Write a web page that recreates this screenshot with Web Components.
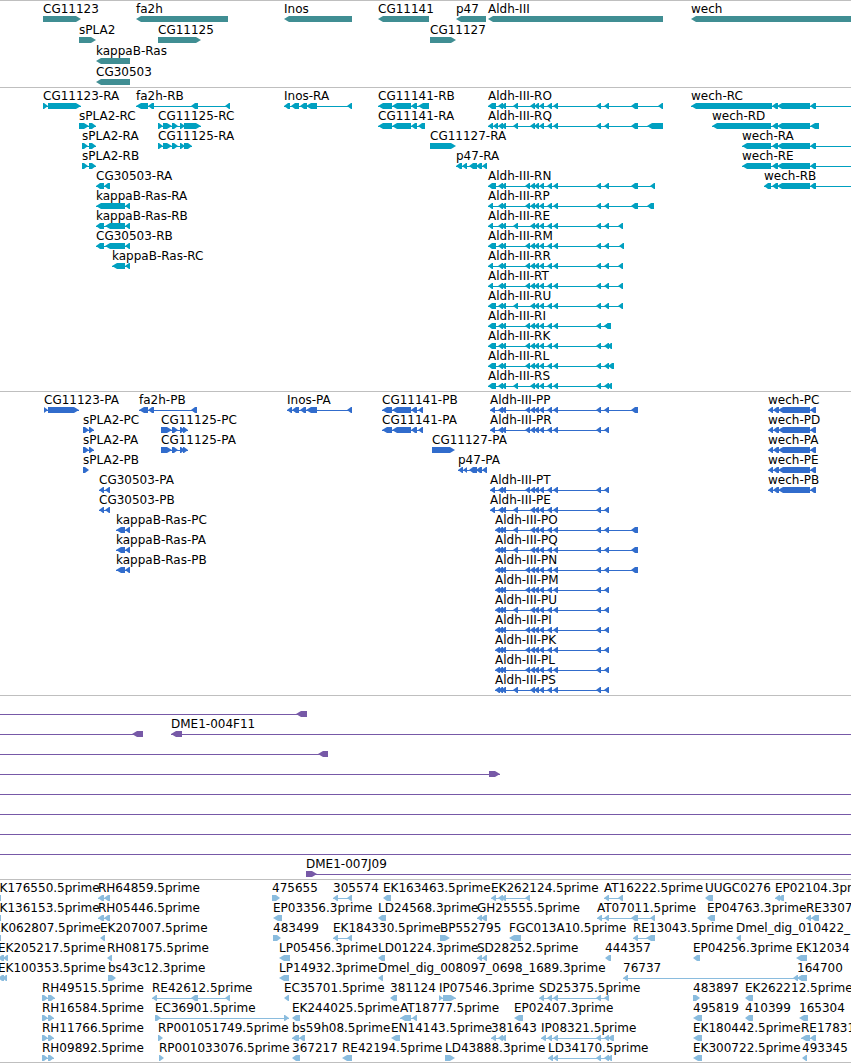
<!DOCTYPE html>
<html lang="en">
<head>
<meta charset="utf-8">
<title>Genome browser</title>
<style>
  body { margin: 0; background: #fff; color: #000; font: 12px/14px "DejaVu Sans", Verdana, sans-serif; }
</style>
</head>
<body>
<genome-view></genome-view>

<template id="view-template">
  <style>
    :host { display: block; overflow: hidden; }
    genome-track:first-of-type { --row-gap: 1px; }
    genome-track:last-of-type { --pad-end: 1px; border-bottom: 1px solid #bfbfbf; }
  </style>
</template>

<template id="track-template">
  <style>
    :host {
      display: flex; flex-direction: column; gap: var(--row-gap, 0);
      padding: 1px 0 var(--pad-end, 2px);
      border-top: 1px solid #bfbfbf;
    }
  </style>
  <slot></slot>
</template>

<template id="row-template">
  <style>
    :host { display: block; position: relative; height: 20px; }
  </style>
  <slot></slot>
</template>

<template id="feature-template">
  <style>
    /* a feature's left edge is its coordinate on the sequence */
    :host { display: block; position: absolute; top: 0; left: var(--start); white-space: nowrap; }
    .label { height: 14px; }
    svg { display: block; height: 6px; fill: var(--ink); }
  </style>
  <div class="label"><slot></slot></div>
  <svg aria-hidden="true"></svg>
</template>

<script>
const stamp = (host, id) => {
  host.attachShadow({ mode: "open" }).append(document.getElementById(id).content.cloneNode(true));
  return host.shadowRoot;
};

class GenomeTrack extends HTMLElement {
  constructor() { super(); stamp(this, "track-template"); }
}
class TrackRow extends HTMLElement {
  constructor() { super(); stamp(this, "row-template"); }
}

class SeqFeature extends HTMLElement {
  constructor() { super(); stamp(this, "feature-template"); }
  connectedCallback() {
    const exons = this.getAttribute("exons").trim().split(/\s+/).map(e => e.split("..").map(Number));
    const forward = this.getAttribute("strand") === "+";
    const start = exons[0][0];
    const width = Math.max(...exons.map(e => e[1])) - start;
    this.style.setProperty("--start", start + "px");
    const svg = this.shadowRoot.querySelector("svg");
    svg.setAttribute("width", width);
    svg.setAttribute("height", 6);
    let body = exons.length > 1 ? `<rect x="0" y="3" width="${width}" height="1"/>` : "";
    for (const [from, to] of exons) {
      const a = from - start, b = to - start, head = b - a > 8 ? 5 : Math.min(4, b - a);
      body += forward
        ? `<path d="M${a} 0H${b - head}L${b} 3L${b - head} 6H${a}Z"/>`
        : `<path d="M${b} 0H${a + head}L${a} 3L${a + head} 6H${b}Z"/>`;
    }
    svg.innerHTML = body;
  }
}

/* exon runs shared by many transcripts */
const PAIR = "498..503 501..506", EX3 = "513..518", EX4 = "525..530";
const CORE = "530..535 534..539 539..544 547..552 553..558 596..601 604..609";
const LONG = `${PAIR} ${EX3} ${CORE}`, SHORT = `${PAIR} ${EX4} ${CORE}`;
const WECH = "772..778 777..810 810..816", EDGE = "3990..4000";
const aldh = (name, first, middle, last = "") => ["Aldh-III-" + name, "-", `${first} ${middle} ${last}`];
const R = "488..493", RW = "488..496", P = "490..495", PN = "495..500";
const wechP = name => ["wech-" + name, "-", "768..773 773..779 778..810 810..816"];

const TRACKS = [
  { ink: "#408e93", rows: [
    [["CG11123","+","43..81"],["fa2h","-","136..228"],["Inos","-","284..352"],["CG11141","-","378..429"],["p47","-","456..486"],["Aldh-III","-","488..663"],["wech","-","691..4000"]],
    [["sPLA2","+","79..96"],["CG11125","+","158..201"],["CG11127","+","430..456"]],
    [["kappaB-Ras","-","96..130"]],
    [["CG30503","-","96..130"]],
  ]},
  { ink: "#00a0c0", rows: [
    [["CG11123-RA","+","43..48 48..81"],["fa2h-RB","-","136..148 148..154 191..198 225..230"],["Inos-RA","-","284..290 291..299 300..307 306..317 347..352"],["CG11141-RB","-","378..392 392..411 411..417 418..429"],aldh("RO",RW,LONG,"631..638 658..663"),["wech-RC","-",`691..772 ${WECH} ${EDGE}`]],
    [["sPLA2-RC","+","79..89 89..96"],["CG11125-RC","+","158..163 163..172 172..178 180..185 184..201"],["CG11141-RA","-","378..392 392..411 411..417 418..425"],aldh("RQ",R + " 493..498",LONG,"631..638 647..663"),["wech-RD","-","712..771 772..778 777..810 810..819"]],
    [["sPLA2-RA","+","82..88 89..96"],["CG11125-RA","+","158..163 163..172 172..178 180..185 184..192"],["CG11127-RA","+","430..456"],["wech-RA","-",`742..771 ${WECH} ${EDGE}`]],
    [["sPLA2-RB","+","82..88 89..96"],["p47-RA","-","456..462 462..467 469..477 476..482 482..487"],["wech-RE","-",`742..771 ${WECH} ${EDGE}`]],
    [["CG30503-RA","-","96..104 104..110"],aldh("RN",RW,SHORT,"631..638 650..655"),["wech-RB","-",`764..771 ${WECH} ${EDGE}`]],
    [["kappaB-Ras-RA","-","96..125 125..130"],aldh("RP",R,SHORT,"631..638 647..654")],
    [["kappaB-Ras-RB","-","96..104 105..125 125..130"],aldh("RE",R,LONG,"618..623")],
    [["CG30503-RB","-","96..104 105..125 125..130"],aldh("RM",RW,SHORT,"619..624")],
    [["kappaB-Ras-RC","-","112..125 125..130"],aldh("RR",R,SHORT,"618..623")],
    [aldh("RT",R,SHORT,"618..623")],
    [aldh("RU",RW,LONG,"618..623")],
    [aldh("RI",RW,SHORT,"604..611")],
    [aldh("RK",RW,SHORT,"607..612")],
    [aldh("RL",RW,SHORT,"608..614")],
    [aldh("RS",RW,LONG,"607..612")],
  ]},
  { ink: "#316ccc", rows: [
    [["CG11123-PA","+","44..48 48..79"],["fa2h-PB","-","139..148 148..154 191..197"],["Inos-PA","-","287..292 292..299 300..306 306..317 347..352"],["CG11141-PB","-","382..392 392..411 411..417 418..423"],aldh("PP",P,SHORT,"631..638"),wechP("PC")],
    [["sPLA2-PC","+","83..89 89..94"],["CG11125-PC","+","161..172 172..178 180..185 183..188"],["CG11141-PA","-","382..392 392..411 411..417 418..423"],aldh("PR",P,SHORT),wechP("PD")],
    [["sPLA2-PA","+","83..89 89..94"],["CG11125-PA","+","161..172 172..178 180..185 183..188"],["CG11127-PA","+","432..455"],wechP("PA")],
    [["sPLA2-PB","+","83..89"],["p47-PA","-","458..463 463..467 469..477 476..482 482..487"],wechP("PE")],
    [["CG30503-PA","-","99..104 105..110"],aldh("PT",P,SHORT),wechP("PB")],
    [["CG30503-PB","-","99..104 105..110"],aldh("PE",P,LONG)],
    [["kappaB-Ras-PC","-","116..125 125..130"],aldh("PO",PN,LONG,"631..638")],
    [["kappaB-Ras-PA","-","116..125 125..130"],aldh("PQ",PN,LONG,"631..638")],
    [["kappaB-Ras-PB","-","116..125 125..130"],aldh("PN",PN,SHORT,"631..638")],
    [aldh("PM",PN,SHORT)],
    [aldh("PU",PN,LONG)],
    [aldh("PI",PN,SHORT)],
    [aldh("PK",PN,SHORT)],
    [aldh("PL",PN,SHORT)],
    [aldh("PS",PN,LONG)],
  ]},
  { ink: "#7759a7", rows: [
    [["","-","-90..-80 296..307"]],
    [["","-","-90..-80 132..143"],["DME1-004F11","-",`171..182 ${EDGE}`]],
    [["","-","-90..-80 318..328"]],
    [["","+","-90..-80 489..500"]],
    [["","+",`-90..-80 ${EDGE}`]],
    [["","+",`-90..-80 ${EDGE}`]],
    [["","+",`-90..-80 ${EDGE}`]],
    [["","+",`-90..-80 ${EDGE}`]],
    [["DME1-007J09","+",`306..317 ${EDGE}`]],
  ]},
  { ink: "#8abcde", rows: [
    [["EK176550.5prime","-","-8..1"],["RH64859.5prime","-","98..104 104..110"],["475655","+","272..280"],["305574","-","333..338 347..352"],["EK163463.5prime","-","383..391"],["EK262124.5prime","-",`491..496 ${PAIR} 525..530`],["AT16222.5prime","-","604..609 618..623"],["UUGC0276","-","705..713"],["EP02104.3prime","-","775..780 778..784"]],
    [["EK136153.5prime","-","-8..1"],["RH05446.5prime","-","98..104 104..110"],["EP03356.3prime","-","273..282"],["LD24568.3prime","-","378..386"],["GH25555.5prime","-","477..482 481..487"],["AT07011.5prime","-","597..602 604..609 631..638 650..655"],["EP04763.3prime","-","707..715"],["RE3307","-","806..811 811..819"]],
    [["EK062807.5prime","-","-7..1"],["EK207007.5prime","-","100..105"],["483499","+","273..281"],["EK184330.5prime","-","333..338 347..352"],["BP552795","+","440..450"],["FGC013A10.5prime","-","509..521"],["RE13043.5prime","-","633..638 646..655"],["Dmel_dig_010422_","-","736..741"]],
    [["EK205217.5prime","-","-2..4 3..8"],["RH08175.5prime","-","107..112"],["LP05456.3prime","-","279..290"],["LD01224.3prime","-","378..385"],["SD28252.5prime","-","477..482 482..487"],["444357","-","605..611"],["EP04256.3prime","-","693..700"],["EK12034","-","796..807"]],
    [["EK100353.5prime","-","-2..4 2..7"],["bs43c12.3prime","+","108..116"],["LP14932.3prime","-","279..289"],["Dmel_dig_008097_0698_1689.3prime","-","378..383"],["76737","-","623..628 793..798 797..807"],["164700","-","797..807"]],
    [["RH49515.5prime","+","42..48 48..55"],["RE42612.5prime","-","152..157 191..198 225..230"],["EC35701.5prime","-","284..289"],["381124","-","390..397"],["IP07546.3prime","+","439..443 443..456"],["SD25375.5prime","-","539..544 547..552 553..558 596..601 604..609"],["483897","+","693..700"],["EK262212.5prime","-","745..753"]],
    [["RH16584.5prime","+","42..48 48..54"],["EC36901.5prime","+","155..161 284..289"],["EK244025.5prime","-","292..300"],["AT18777.5prime","-","400..411 412..417"],["EP02407.3prime","-","514..523"],["495819","-","693..702"],["410399","-","745..753"],["165304","-","799..808"]],
    [["RH11766.5prime","+","42..48 48..54"],["RP001051749.5prime","+","158..163"],["bs59h08.5prime","-","292..299 299..305"],["EN14143.5prime","-","391..400"],["381643","-",`491..496 ${PAIR}`],["IP08321.5prime","-","541..546 547..552 553..558 596..601 604..609 608..614"],["EK180442.5prime","-","693..702"],["RE17831","-","801..810 810..816"]],
    [["RH09892.5prime","+","42..48 48..54"],["RP001033076.5prime","+","159..164"],["367217","-","292..300"],["RE42194.5prime","-","342..352"],["LD43888.3prime","+","445..455"],["LD34170.5prime","-","548..553 553..558 596..601 604..609 607..612"],["EK300722.5prime","-","693..702"],["493345","-","802..807"]],
  ]},
];

class GenomeView extends HTMLElement {
  constructor() {
    super();
    const root = stamp(this, "view-template");
    for (const { ink, rows } of TRACKS) {
      const track = document.createElement("genome-track");
      track.style.setProperty("--ink", ink);
      for (const features of rows) {
        const row = document.createElement("track-row");
        for (const [name, strand, exons] of features) {
          const feature = document.createElement("seq-feature");
          feature.setAttribute("strand", strand);
          feature.setAttribute("exons", exons);
          feature.textContent = name;
          row.append(feature);
        }
        track.append(row);
      }
      root.append(track);
    }
  }
}

customElements.define("genome-track", GenomeTrack);
customElements.define("track-row", TrackRow);
customElements.define("seq-feature", SeqFeature);
customElements.define("genome-view", GenomeView);
</script>
</body>
</html>
